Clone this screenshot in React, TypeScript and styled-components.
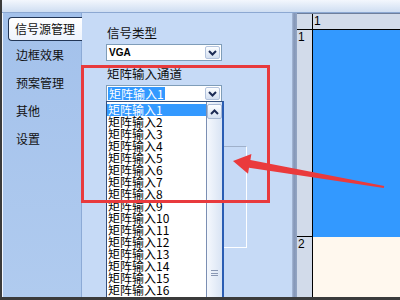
import React from 'react'
import styled, { createGlobalStyle } from 'styled-components'

const GlobalStyle = createGlobalStyle`
  html, body { margin: 0; padding: 0; background: #3b3b3b; }
  body { font-family: "Noto Sans CJK SC", "Liberation Sans", sans-serif; }
`

const cjk = `"Noto Sans CJK SC", "Liberation Sans", sans-serif`

const Window = styled.div`
  position: relative;
  width: 400px;
  height: 300px;
  display: flex;
  flex-direction: column;
  background: #3b3b3b;
  overflow: hidden;
`

const TitleStrip = styled.div`
  height: 12px;
  margin-left: 2px;
  background: linear-gradient(#f3f7fd, #e6eef9 35%, #cfdef2);
  border-bottom: 1px solid #8ca8d2;
`

const Body = styled.div`
  flex: 1;
  min-height: 0;
  display: flex;
  margin-left: 2px;
  margin-bottom: 3px;
  border-left: 1px solid #f4f8ff;
`

const Sidebar = styled.div`
  width: 78px;
  padding-top: 4px;
  display: flex;
  flex-direction: column;
  background: linear-gradient(#a3c1eb, #b0cbef);
  border-right: 1px solid #8caad6;
`

const Tab = styled.div<{ $active?: boolean }>`
  height: ${p => (p.$active ? 24 : 28)}px;
  box-sizing: border-box;
  display: flex;
  align-items: center;
  font: 12px/1 ${cjk};
  color: #111;
  padding-left: ${p => (p.$active ? 6 : 13)}px;
  margin-left: ${p => (p.$active ? 5 : 0)}px;
  margin-right: ${p => (p.$active ? -1 : 0)}px;
  position: relative;
  z-index: 1;
  background: ${p => (p.$active ? 'linear-gradient(#ffffff, #eef4fd)' : 'transparent')};
  border: ${p => (p.$active ? '1px solid #233656' : 'none')};
  border-right: none;
  border-radius: 4px 0 0 4px;
`

const MainPanel = styled.div`
  width: 210px;
  position: relative;
  overflow: hidden;
  padding: 12px 0 0 25px;
  box-sizing: border-box;
  display: flex;
  flex-direction: column;
  align-items: flex-start;
  background: #c6daf6;
`

const Label = styled.div<{ $gap: number }>`
  margin-top: ${p => p.$gap}px;
  height: 16px;
  font: 12.5px/16px ${cjk};
  color: #111;
`

const SelectBox = styled.div`
  position: relative;
  margin: 3px 0 0 -1px;
  width: 116px;
  height: 17px;
  box-sizing: border-box;
  border: 1px solid #7f9db9;
  background: #fff;
  display: flex;
  align-items: center;
`

const SelectValue = styled.span<{ $active?: boolean }>`
  margin-left: 1px;
  padding: 0 1px;
  height: 13px;
  font: ${p => (p.$active ? `12px/13px ${cjk}` : `bold 10px/13px "Liberation Sans", sans-serif`)};
  background: ${p => (p.$active ? '#3399ff' : 'transparent')};
  color: ${p => (p.$active ? '#fff' : '#000')};
`

const DropButton = styled.div`
  margin-left: auto;
  margin-right: 1px;
  width: 15px;
  height: 13px;
  box-sizing: border-box;
  border: 1px solid #b3c3dd;
  border-radius: 2px;
  background: linear-gradient(#fdfeff, #d3dff1);
  display: flex;
  align-items: center;
  justify-content: center;
`

const ListPopup = styled.div`
  position: absolute;
  top: 100%;
  left: -1px;
  width: 118px;
  z-index: 2;
  display: flex;
  box-sizing: border-box;
  border: 1px solid #34507e;
  border-right: 2px solid #2a5db3;
  background: #fff;
`

const ListItems = styled.div`
  flex: 1;
  padding-top: 2px;
  display: flex;
  flex-direction: column;
`

const ListItem = styled.div<{ $selected?: boolean }>`
  height: 12px;
  padding-left: 1px;
  font: 12px/12px ${cjk};
  white-space: nowrap;
  background: ${p => (p.$selected ? '#3399ff' : 'transparent')};
  color: ${p => (p.$selected ? '#fff' : '#000')};
`

const ScrollBar = styled.div`
  width: 16px;
  display: flex;
  flex-direction: column;
  border-left: 1px solid #7b8fb3;
  box-sizing: border-box;
  background: linear-gradient(90deg, #f5f8fd, #d9e4f4);
`

const ScrollButton = styled.div`
  margin: 2px 0 0 0;
  height: 15px;
  box-sizing: border-box;
  border: 1px solid #a7b8d4;
  border-radius: 2px;
  background: linear-gradient(#fdfeff, #d5e1f3);
  display: flex;
  align-items: center;
  justify-content: center;
`

const ScrollThumb = styled.div`
  height: 308px;
  display: flex;
  align-items: center;
  justify-content: center;
`

const Grip = styled.div`
  width: 7px;
  height: 6px;
  border-top: 1px solid #8a98b4;
  border-bottom: 1px solid #8a98b4;
  box-sizing: border-box;
  display: flex;
  align-items: center;
  &::after {
    content: '';
    width: 100%;
    height: 1px;
    background: #8a98b4;
  }
`

const GroupBox = styled.div`
  margin: 44px 0 0 20px;
  width: 120px;
  height: 102px;
  box-sizing: border-box;
  border-top: 1px solid #9fb0ca;
  border-right: 1px solid #fdfeff;
  border-bottom: 1px solid #fdfeff;
`

const Splitter = styled.div`
  width: 5px;
  background: linear-gradient(90deg, #a9bbd8, #8496b7 40%, #94a6c4);
`

const Grid = styled.div`
  flex: 1;
  display: grid;
  grid-template-columns: 16px 1fr;
  grid-template-rows: 16px 207px 1fr;
  border-top: 1px solid #6e7f9c;
  background: #d2dbea;
`

const HeadCell = styled.div<{ $right?: boolean; $bottom?: boolean }>`
  box-sizing: border-box;
  border-right: ${p => (p.$right ? '1px solid #000' : 'none')};
  border-bottom: ${p => (p.$bottom ? '1px solid #000' : 'none')};
  padding: 1px 0 0 1px;
  font: 12px/13px "Liberation Sans", sans-serif;
  color: #000;
`

const ScreenCell = styled.div<{ $tone: string }>`
  background: ${p => p.$tone};
`

const RedFrame = styled.div`
  position: absolute;
  left: 81px;
  top: 65px;
  width: 189px;
  height: 138px;
  box-sizing: border-box;
  border: 3px solid #e83a3d;
  z-index: 5;
  pointer-events: none;
`

const ArrowLayer = styled.svg`
  position: absolute;
  left: 0;
  top: 0;
  z-index: 6;
  pointer-events: none;
`

const Chevron = ({ up }: { up?: boolean }) => (
  <svg width="9" height="6" viewBox="0 0 9 6">
    <path d={up ? 'M1 5L4.5 1.5L8 5' : 'M1 1L4.5 4.5L8 1'} fill="none" stroke="#1c2b55" strokeWidth="2" />
  </svg>
)

const sideTabs = ['信号源管理', '边框效果', '预案管理', '其他', '设置']
const inputs = Array.from({ length: 16 }, (_, i) => `矩阵输入${i + 1}`)

export default function App() {
  return (
    <Window>
      <GlobalStyle />
      <TitleStrip />
      <Body>
        <Sidebar>
          {sideTabs.map((t, i) => (
            <Tab key={t} $active={i === 0}>{t}</Tab>
          ))}
        </Sidebar>
        <MainPanel>
          <Label $gap={0}>信号类型</Label>
          <SelectBox>
            <SelectValue>VGA</SelectValue>
            <DropButton><Chevron /></DropButton>
          </SelectBox>
          <Label $gap={5}>矩阵输入通道</Label>
          <SelectBox>
            <SelectValue $active>矩阵输入1</SelectValue>
            <DropButton><Chevron /></DropButton>
            <ListPopup>
              <ListItems>
                {inputs.map((s, i) => (
                  <ListItem key={s} $selected={i === 0}>{s}</ListItem>
                ))}
              </ListItems>
              <ScrollBar>
                <ScrollButton><Chevron up /></ScrollButton>
                <ScrollThumb><Grip /></ScrollThumb>
              </ScrollBar>
            </ListPopup>
          </SelectBox>
          <GroupBox />
        </MainPanel>
        <Splitter />
        <Grid>
          <HeadCell $right $bottom />
          <HeadCell $bottom>1</HeadCell>
          <HeadCell $right $bottom>1</HeadCell>
          <ScreenCell $tone="#3399ff" />
          <HeadCell $right>2</HeadCell>
          <ScreenCell $tone="#fff8ee" />
        </Grid>
      </Body>
      <RedFrame />
      <ArrowLayer width="400" height="300" viewBox="0 0 400 300">
        <polygon
          points="233,161 251.4,154 250.4,160 384.2,186 383.8,188 249,167.8 248,173.8"
          fill="#ea3a3c"
        />
      </ArrowLayer>
    </Window>
  )
}
